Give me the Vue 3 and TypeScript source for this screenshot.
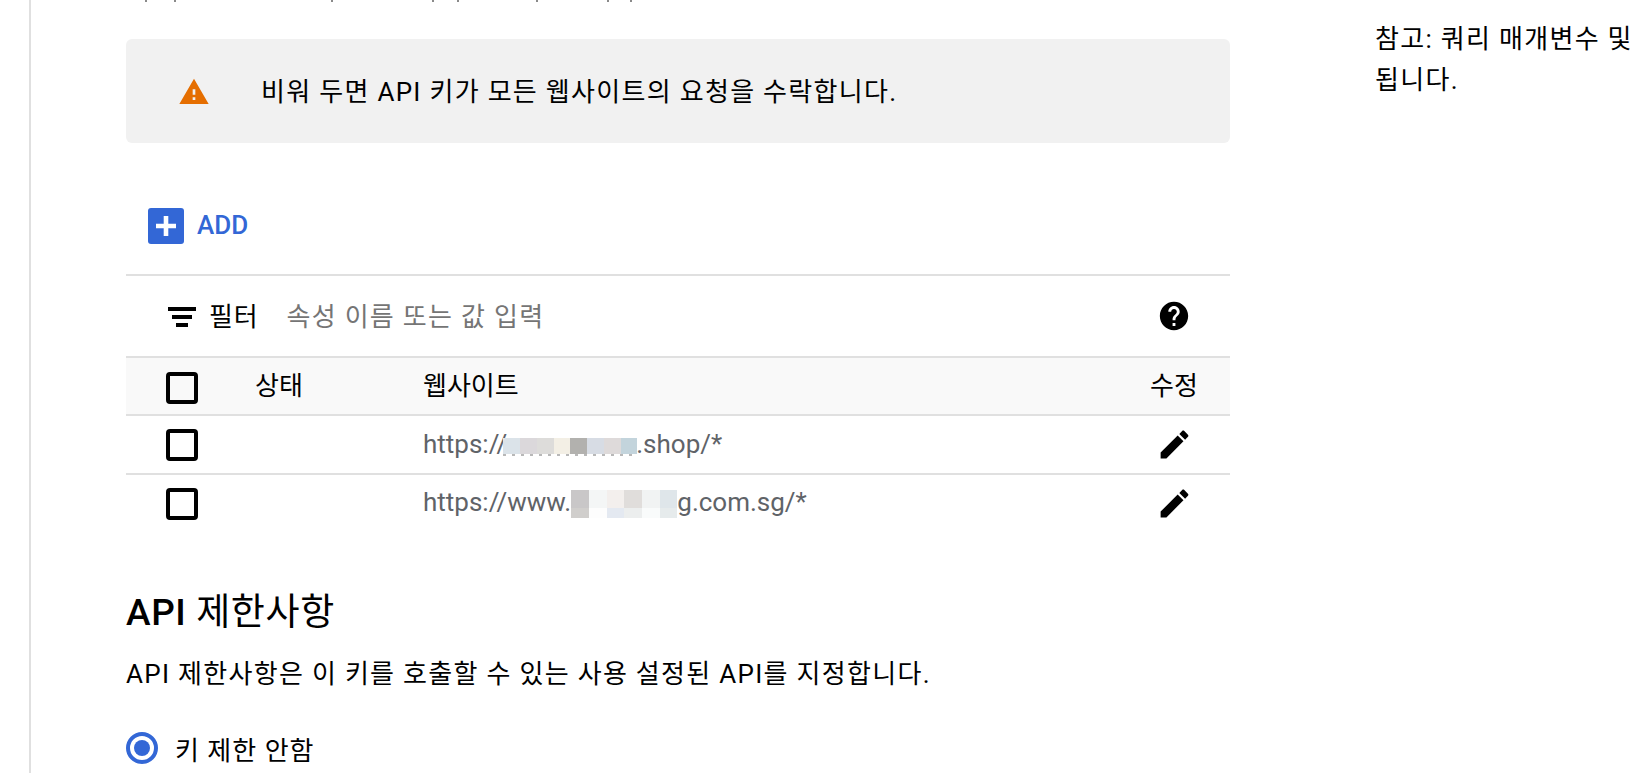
<script setup lang="ts">
const ticks = [145, 174, 331, 432, 457, 536, 607, 630]

interface Site {
  before: string
  after: string
  blur: string[][]
  blurClass: string
}

const sites: Site[] = [
  {
    before: 'https://',
    after: '.shop/*',
    blurClass: 'one',
    blur: [['#dbe3e9', '#dbd8db', '#dddcda', '#f3efe5', '#b2b1ae', '#d7dce4', '#dedada', '#c3d4dc']],
  },
  {
    before: 'https://www.',
    after: 'g.com.sg/*',
    blurClass: 'two',
    blur: [
      ['#c9c7c8', '#f4f6f6', '#f3efed', '#e0dddb', '#f1f3f3', '#dfe6ea'],
      ['#d0cecc', '#fdfdfd', '#e4e9f1', '#eceeee', '#f9fbfb', '#e6ebec'],
    ],
  },
]
</script>

<template>
  <div class="page">
    <main class="main">
      <svg class="ticks" width="660" height="3" viewBox="0 0 660 3">
        <rect v-for="t in ticks" :key="t" :x="t - 126" y="0" width="2" height="2" fill="#8a8a8a" />
      </svg>

      <div class="notice">
        <svg class="warn" viewBox="0 0 24 24" width="32" height="32">
          <path fill="#e56e00" d="M1 21h22L12 2 1 21zm12-3h-2v-2h2v2zm0-4h-2v-4h2v4z" />
        </svg>
        <span class="spaced notice-text">비워 두면 API 키가 모든 웹사이트의 요청을 수락합니다.</span>
      </div>

      <div class="add">
        <span class="add-icon">
          <svg viewBox="0 0 20 20" width="20" height="20">
            <path fill="#fff" d="M7.7 0h4.6v7.7H20v4.6h-7.7V20H7.7v-7.7H0V7.7h7.7z" />
          </svg>
        </span>
        <span class="add-label">ADD</span>
      </div>

      <div class="filter">
        <svg class="filter-icon" viewBox="0 0 28 20" width="28" height="20">
          <path d="M0 0h28v4H0zM4 8h20v4H4zM8 16h12v4H8z" />
        </svg>
        <span class="filter-label">필터</span>
        <span class="spaced filter-hint">속성 이름 또는 값 입력</span>
        <svg class="help" viewBox="0 0 24 24" width="34" height="34">
          <path d="M12 2C6.48 2 2 6.48 2 12s4.48 10 10 10 10-4.48 10-10S17.52 2 12 2zm1 17h-2v-2h2v2zm2.07-7.75l-.9.92C13.45 12.9 13 13.5 13 15h-2v-.5c0-1.1.45-2.1 1.17-2.83l1.24-1.26c.37-.36.59-.86.59-1.41 0-1.1-.9-2-2-2s-2 .9-2 2H8c0-2.21 1.79-4 4-4s4 1.79 4 4c0 .88-.36 1.68-.93 2.25z" />
        </svg>
      </div>

      <div class="row head">
        <span class="check"></span>
        <span class="status">상태</span>
        <span class="site">웹사이트</span>
        <span class="edit">수정</span>
      </div>
      <div v-for="s in sites" :key="s.after" class="row">
        <span class="check"></span>
        <span class="status"></span>
        <span class="site url">
          {{ s.before }}<span class="blur" :class="s.blurClass">
            <span v-for="(line, i) in s.blur" :key="i" class="blur-line">
              <i v-for="(c, j) in line" :key="j" :style="{ background: c }"></i>
            </span>
          </span>{{ s.after }}
        </span>
        <span class="edit">
          <svg viewBox="0 0 24 24" width="37" height="37">
            <path d="M3 17.25V21h3.75L17.81 9.94l-3.75-3.75L3 17.25zM20.71 7.04c.39-.39.39-1.02 0-1.41l-2.34-2.34c-.39-.39-1.02-.39-1.41 0l-1.83 1.83 3.75 3.75 1.83-1.83z" />
          </svg>
        </span>
      </div>

      <h2 class="title"><b>API</b> 제한사항</h2>
      <p class="spaced desc">API 제한사항은 이 키를 호출할 수 있는 사용 설정된 API를 지정합니다.</p>
      <div class="radio-row">
        <span class="radio"><span class="dot"></span></span>
        <span class="radio-label">키 제한 안함</span>
      </div>
    </main>

    <aside class="spaced side">참고: 쿼리 매개변수 및<br />됩니다.</aside>
  </div>
</template>

<style>
html,
body {
  margin: 0;
  height: 773px;
  overflow: hidden;
  background: #fff;
}
</style>

<style scoped>
.page {
  display: flex;
  width: 1634px;
  height: 773px;
  overflow: hidden;
  font-family: Roboto, "Noto Sans CJK KR", sans-serif;
  font-size: 26px;
  color: #000;
}

.spaced {
  letter-spacing: 1.3px;
}

.main {
  flex: none;
  width: 1104px;
  margin-left: 29px;
  padding-left: 95px;
  border-left: 2px solid #e0e0e0;
}

.ticks {
  display: block;
  height: 3px;
  margin-bottom: 36px;
}

.notice {
  display: flex;
  align-items: center;
  height: 104px;
  padding-left: 52px;
  gap: 51px;
  background: #f1f1f1;
  border-radius: 6px;
}

.notice-text {
  margin-bottom: 4px;
}

.warn {
  flex: none;
  margin-top: 2px;
}

.add {
  display: flex;
  align-items: center;
  gap: 13px;
  height: 36px;
  margin: 65px 0 30px 22px;
}

.add-icon {
  display: flex;
  align-items: center;
  justify-content: center;
  width: 36px;
  height: 36px;
  background: #3367d6;
  border-radius: 3px;
}

.add-label {
  margin-bottom: 2px;
  font-size: 26px;
  font-weight: 500;
  color: #3367d6;
}

.filter {
  display: flex;
  align-items: center;
  height: 80px;
  border-top: 2px solid #e0e0e0;
  padding-left: 42px;
  padding-right: 39px;
}

.filter-icon {
  flex: none;
  margin-top: 2px;
}

.filter-label {
  margin: 0 0 4px 13px;
  letter-spacing: 0.8px;
}

.filter-hint {
  margin: 0 0 4px 28px;
  color: #757575;
}

.help {
  margin-left: auto;
}

.row {
  display: flex;
  align-items: center;
  height: 57px;
  border-top: 2px solid #e0e0e0;
}

.row.head {
  height: 56px;
  background: #f9f9f9;
}

.head .status,
.head .site,
.head .edit {
  margin-bottom: 6px;
}

.head .check {
  margin-top: 4px;
}

.check {
  flex: none;
  box-sizing: border-box;
  width: 32px;
  height: 32px;
  margin-left: 40px;
  border: 4px solid #000;
  border-radius: 4px;
}

.status {
  flex: none;
  width: 168px;
  margin-left: 57px;
}

.site {
  flex: 1;
  white-space: nowrap;
}

.url {
  color: #5f6368;
  margin-bottom: 2px;
}

.edit {
  flex: none;
  display: flex;
  justify-content: center;
  width: 68px;
  margin-right: 22px;
}

.blur {
  display: inline-flex;
  flex-direction: column;
  vertical-align: middle;
}

.blur.one {
  height: 16px;
  margin-left: -4px;
  margin-right: -1px;
}

.blur.one::after {
  content: "";
  display: block;
  height: 2px;
  flex: none;
  background: repeating-linear-gradient(90deg, #b8b8b8 0 3px, transparent 3px 9px);
}

.blur.two {
  height: 28px;
}

.blur-line {
  display: flex;
  flex: none;
  height: 16px;
}

.blur.two .blur-line:first-child {
  height: 18px;
}

.blur.two .blur-line {
  height: 10px;
}

.blur-line i {
  display: block;
  width: 17.7px;
}

.blur.one .blur-line i {
  width: 16.75px;
}

.title {
  margin: 57px 0 0;
  font-size: 37px;
  font-weight: 400;
  letter-spacing: 0.6px;
  line-height: 48px;
}

.title b {
  font-weight: 500;
}

.desc {
  margin: 19px 0 0;
  line-height: 36px;
}

.radio-row {
  display: flex;
  align-items: center;
  gap: 17px;
  margin-top: 40px;
  height: 32px;
}

.radio-label {
  letter-spacing: 1px;
}

.radio {
  flex: none;
  box-sizing: border-box;
  display: flex;
  align-items: center;
  justify-content: center;
  width: 32px;
  height: 32px;
  border: 4px solid #3367d6;
  border-radius: 50%;
}

.dot {
  width: 16px;
  height: 16px;
  background: #3367d6;
  border-radius: 50%;
}

.side {
  flex: none;
  margin: 19px 0 0 145px;
  width: 300px;
  line-height: 41px;
  white-space: nowrap;
}
</style>
